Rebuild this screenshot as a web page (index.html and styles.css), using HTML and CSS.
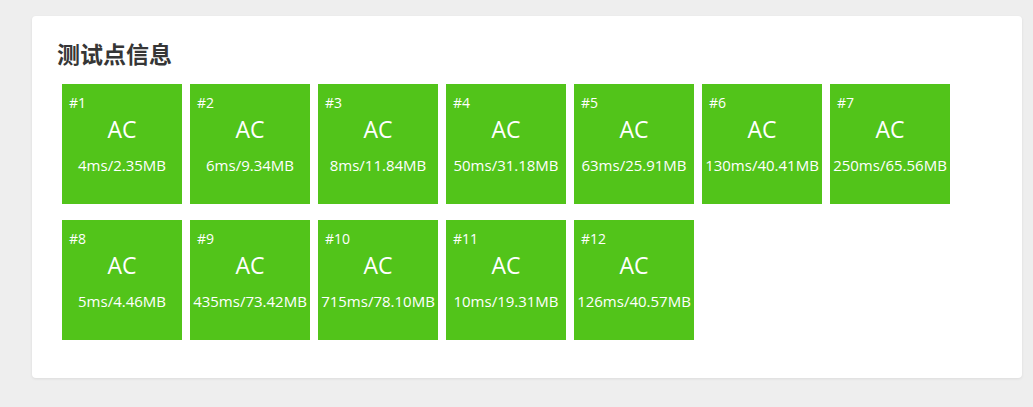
FILE: index.html
```html
<!DOCTYPE html>
<html lang="zh-CN">
<head>
<meta charset="utf-8">
<title>测试点信息</title>
<link rel="stylesheet" href="styles.css">
</head>
<body>
<div class="card">
  <h3 class="title">测试点信息</h3>
  <div class="cases">
    <div class="case"><div class="num">#1</div><div class="status">AC</div><div class="usage">4ms/2.35MB</div></div>
    <div class="case"><div class="num">#2</div><div class="status">AC</div><div class="usage">6ms/9.34MB</div></div>
    <div class="case"><div class="num">#3</div><div class="status">AC</div><div class="usage">8ms/11.84MB</div></div>
    <div class="case"><div class="num">#4</div><div class="status">AC</div><div class="usage">50ms/31.18MB</div></div>
    <div class="case"><div class="num">#5</div><div class="status">AC</div><div class="usage">63ms/25.91MB</div></div>
    <div class="case"><div class="num">#6</div><div class="status">AC</div><div class="usage">130ms/40.41MB</div></div>
    <div class="case"><div class="num">#7</div><div class="status">AC</div><div class="usage">250ms/65.56MB</div></div>
    <div class="case"><div class="num">#8</div><div class="status">AC</div><div class="usage">5ms/4.46MB</div></div>
    <div class="case"><div class="num">#9</div><div class="status">AC</div><div class="usage">435ms/73.42MB</div></div>
    <div class="case"><div class="num">#10</div><div class="status">AC</div><div class="usage">715ms/78.10MB</div></div>
    <div class="case"><div class="num">#11</div><div class="status">AC</div><div class="usage">10ms/19.31MB</div></div>
    <div class="case"><div class="num">#12</div><div class="status">AC</div><div class="usage">126ms/40.57MB</div></div>
  </div>
</div>
</body>
</html>
```
FILE: styles.css
```css
html, body {
  margin: 0;
  padding: 0;
  background: #eeeeee;
}
body {
  padding: 16px 11px 29px 32px;
  font-family: "Open Sans", "Noto Sans CJK SC", sans-serif;
}
.card {
  background: #ffffff;
  border-radius: 4px;
  box-shadow: 0 1px 3px rgba(0, 0, 0, 0.08);
  padding: 22px 26px 38px 26px;
  height: 302px;
}
.title {
  margin: 0 0 16px -1px;
  font-family: "Noto Sans CJK SC", sans-serif;
  font-size: 23px;
  line-height: 30px;
  font-weight: 700;
  color: #363636;
}
.cases {
  display: flex;
  flex-wrap: wrap;
  gap: 16px 8px;
  padding-left: 4px;
}
.case {
  width: 120px;
  height: 120px;
  box-sizing: border-box;
  background: #52c41a;
  color: #ffffff;
  padding: 10px 0 0 0;
  display: flex;
  flex-direction: column;
}
.num {
  padding-left: 7px;
  font-size: 14px;
  line-height: 18px;
  height: 18px;
}
.status {
  margin-top: 2px;
  text-align: center;
  font-size: 23px;
  line-height: 30px;
}
.usage {
  margin-top: 11px;
  text-align: center;
  font-size: 15px;
  line-height: 20px;
  white-space: nowrap;
}
```
